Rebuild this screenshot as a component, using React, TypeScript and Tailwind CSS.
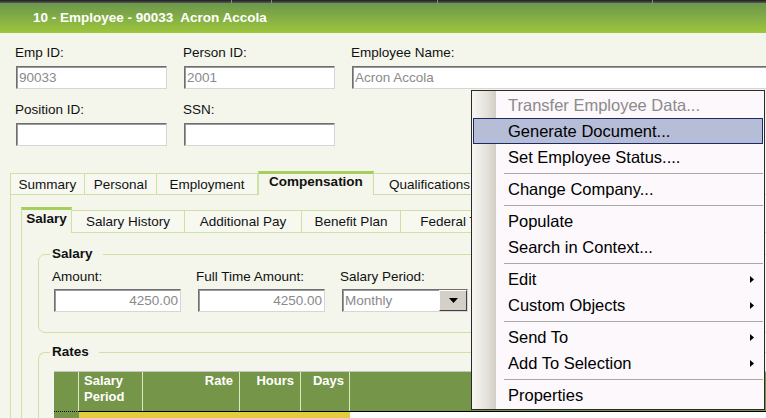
import React from "react";

type Tab = { label: string; width: string; active?: boolean };

const outerTabs: Tab[] = [
  { label: "Summary", width: "w-[75px]" },
  { label: "Personal", width: "w-[72px]" },
  { label: "Employment", width: "w-[101px]" },
  { label: "Compensation", width: "w-[116px]", active: true },
  { label: "Qualifications", width: "w-[112px]" },
];

const innerTabs: Tab[] = [
  { label: "Salary", width: "w-[51px]", active: true },
  { label: "Salary History", width: "w-[113px]" },
  { label: "Additional Pay", width: "w-[117px]" },
  { label: "Benefit Plan", width: "w-[99px]" },
  { label: "Federal Tax", width: "w-[110px]" },
];

type MenuEntry =
  | { kind: "item"; label: string; disabled?: boolean; selected?: boolean; sub?: boolean }
  | { kind: "sep" };

const menu: MenuEntry[] = [
  { kind: "item", label: "Transfer Employee Data...", disabled: true },
  { kind: "item", label: "Generate Document...", selected: true },
  { kind: "item", label: "Set Employee Status...." },
  { kind: "sep" },
  { kind: "item", label: "Change Company..." },
  { kind: "sep" },
  { kind: "item", label: "Populate" },
  { kind: "item", label: "Search in Context..." },
  { kind: "sep" },
  { kind: "item", label: "Edit", sub: true },
  { kind: "item", label: "Custom Objects", sub: true },
  { kind: "sep" },
  { kind: "item", label: "Send To", sub: true },
  { kind: "item", label: "Add To Selection", sub: true },
  { kind: "sep" },
  { kind: "item", label: "Properties" },
];

const inputBox =
  "h-[23px] bg-white border border-t-[#6f6f6f] border-l-[#6f6f6f] border-b-[#d6d6d6] border-r-[#d6d6d6] shadow-[inset_1px_1px_0_#9a9a9a] text-[13.5px] leading-[20px] text-[#8a8a8a] flex items-center";

const Field = ({ label, value, width }: { label: string; value?: string; width: string }) => (
  <div className="w-[168px] shrink-0">
    <div className="text-[13.5px] leading-[16px] text-[#111]">{label}</div>
    <div className={`mt-[5px] ml-[1px] px-[2px] ${width} ${inputBox}`}>{value}</div>
  </div>
);

const TabStrip = ({ tabs, outer }: { tabs: Tab[]; outer: boolean }) => (
  <div className="flex items-end">
    {tabs.map((t, i) =>
      t.active ? (
        <div
          key={t.label}
          className={`${t.width} ${
            outer ? "h-[24px]" : "h-[26px] pt-[1px]"
          } shrink-0 flex justify-center items-start border-t-[3px] border-t-[#a4cf5c] border-x border-x-[#cfe0a6] bg-[#f4f6ec] font-bold text-[13.5px] leading-[16px] text-[#111]`}
        >
          {t.label}
        </div>
      ) : (
        <div
          key={t.label}
          className={`${t.width} ${outer ? "h-[22px]" : "h-[23px]"} ${
            i === 0 ? "border-l" : ""
          } shrink-0 flex justify-center items-center pt-[1px] border-t border-r border-b border-[#cfe0a6] bg-[#f7f9f1] text-[13.5px] leading-[16px] text-[#111] whitespace-nowrap overflow-hidden`}
        >
          {t.label}
        </div>
      )
    )}
    <div className="flex-1 min-w-[200px] border-b border-[#cfe0a6]" />
  </div>
);

const Arrow = () => (
  <svg width="4" height="7" viewBox="0 0 4 7" className="ml-auto mr-[10px]">
    <polygon points="0,0 4,3.5 0,7" fill="#000" />
  </svg>
);

export default function App() {
  return (
    <div className="relative w-[766px] h-[418px] overflow-hidden bg-[#f4f6ec] font-['Liberation_Sans',Arial,sans-serif]">
      {/* toolbar edge */}
      <div className="flex h-[3px] bg-linear-to-b from-[#1e1e1e] to-[#5c5c5c]">
        <div className="w-[232px] border-r border-[#8a8a8a]" />
        <div className="w-[40px] border-r border-[#8a8a8a]" />
        <div className="w-[166px] border-r border-[#8a8a8a]" />
        <div className="w-[215px] border-r border-[#8a8a8a]" />
      </div>

      {/* title bar */}
      <div className="h-[30px] flex items-center pl-[33px] bg-linear-to-b from-[#6b974b] to-[#9ec63a] text-white font-bold text-[13.5px] whitespace-pre">
        {"10 - Employee - 90033  Acron Accola"}
      </div>

      {/* header fields */}
      <div className="pt-[12px] pl-[15px]">
        <div className="flex">
          <Field label="Emp ID:" value="90033" width="w-[151px]" />
          <Field label="Person ID:" value="2001" width="w-[151px]" />
          <Field label="Employee Name:" value="Acron Accola" width="w-[500px]" />
        </div>
        <div className="flex mt-[13px]">
          <Field label="Position ID:" width="w-[151px]" />
          <Field label="SSN:" width="w-[151px]" />
        </div>
      </div>

      {/* tabs */}
      <div className="mt-[25px] pl-[10px] w-[900px]">
        <TabStrip tabs={outerTabs} outer />
        <div className="border-l border-[#cfe0a6] pl-[10px] pt-[12px]">
          <TabStrip tabs={innerTabs} outer={false} />
          <div className="border-l border-[#cfe0a6] pl-[16px] pt-[13px]">
            <fieldset className="border border-[#cfe0a6] rounded-l-[7px] pl-[11px] pb-[20px]">
              <legend className="px-[2px] pr-[10px] font-bold text-[13.5px] leading-[16px] text-[#111]">
                Salary
              </legend>
              <div className="flex pt-[7px] pl-[2px]">
                <div className="w-[144px] shrink-0">
                  <div className="text-[13.5px] leading-[16px] text-[#111]">Amount:</div>
                  <div className={`mt-[4px] ml-[2px] w-[127px] justify-end pr-[2px] ${inputBox}`}>4250.00</div>
                </div>
                <div className="w-[144px] shrink-0">
                  <div className="text-[13.5px] leading-[16px] text-[#111]">Full Time Amount:</div>
                  <div className={`mt-[4px] ml-[2px] w-[127px] justify-end pr-[2px] ${inputBox}`}>4250.00</div>
                </div>
                <div className="w-[144px] shrink-0">
                  <div className="text-[13.5px] leading-[16px] text-[#111]">Salary Period:</div>
                  <div className={`mt-[4px] ml-[2px] w-[126px] pl-[2px] ${inputBox}`}>
                    <span className="flex-1">Monthly</span>
                    <div className="w-[28px] h-[21px] flex items-center justify-center bg-[#d4d0c8] border border-t-white border-l-white border-b-[#404040] border-r-[#404040]">
                      <svg width="9" height="5" viewBox="0 0 9 5">
                        <polygon points="0,0 9,0 4.5,5" fill="#000" />
                      </svg>
                    </div>
                  </div>
                </div>
              </div>
            </fieldset>

            <fieldset className="mt-[11px] border-t border-l border-[#cfe0a6] rounded-tl-[7px] pl-[11px]">
              <legend className="px-[2px] pr-[10px] font-bold text-[13.5px] leading-[16px] text-[#111]">
                Rates
              </legend>
              <div className="pt-[11px] pl-[4px]">
                <div className="border-t border-[#c6c6c6]">
                  <div className="flex h-[39px] bg-[#759549] text-white font-bold text-[13px] leading-[16px]">
                    <div className="w-[25px] border-r border-[#dce9bf]" />
                    <div className="w-[64px] border-r border-[#dce9bf] pl-[5px] pt-[1px]">
                      Salary
                      <br />
                      Period
                    </div>
                    <div className="w-[97px] border-r border-[#dce9bf] text-right pr-[6px] pt-[1px]">Rate</div>
                    <div className="w-[61px] border-r border-[#dce9bf] text-right pr-[6px] pt-[1px]">Hours</div>
                    <div className="w-[49px] border-r border-[#dce9bf] text-right pr-[5px] pt-[1px]">Days</div>
                    <div className="w-[500px]" />
                  </div>
                  <div className="flex h-[10px]">
                    <div className="w-[25px] bg-[#759549] border-t border-dotted border-black" />
                    <div className="w-[271px] bg-[#e2cd3d] border-t border-black" />
                    <div className="w-[500px] bg-white border-t border-black" />
                  </div>
                </div>
              </div>
            </fieldset>
          </div>
        </div>
      </div>

      {/* context menu */}
      <div className="absolute left-[471px] top-[90px] w-[294px] border border-[#2a2a2a] py-[1px] bg-[linear-gradient(to_right,#f7f6f2_0px,#e6e3dc_14px,#d2cec6_24px,#fcf8fc_24px)] text-[16.5px] leading-[20px]">
        {menu.map((m, i) =>
          m.kind === "sep" ? (
            <div key={i} className="h-[6px] flex items-center pl-[32px] pr-[1px]">
              <div className="flex-1 h-px bg-[#a8a8a8]" />
            </div>
          ) : m.selected ? (
            <div
              key={i}
              className="h-[26px] mx-[1px] flex items-center pl-[34px] border border-[#1c2a66] bg-[#b5bdd7] text-black"
            >
              {m.label}
            </div>
          ) : (
            <div
              key={i}
              className={`h-[26px] flex items-center pl-[36px] ${m.disabled ? "text-[#8b8b8b]" : "text-black"}`}
            >
              {m.label}
              {m.sub && <Arrow />}
            </div>
          )
        )}
      </div>
    </div>
  );
}
